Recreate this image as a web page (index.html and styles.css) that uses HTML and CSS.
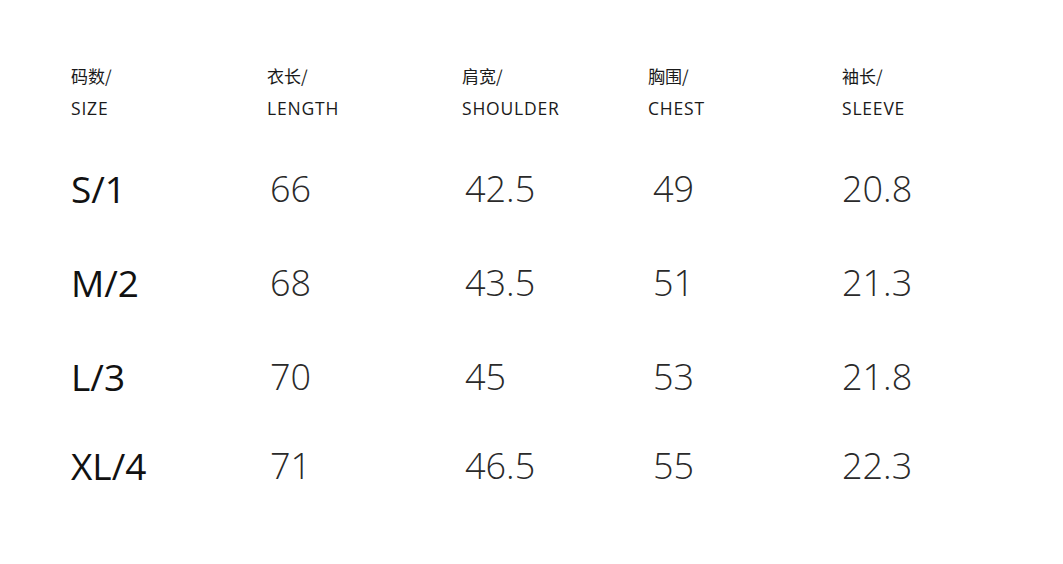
FILE: index.html
```html
<!DOCTYPE html>
<html lang="zh">
<head>
<meta charset="utf-8">
<link rel="stylesheet" href="styles.css">
</head>
<body>
<div class="table">
  <div class="head">
    <div class="th"><span class="cn">码数/</span><span class="en">SIZE</span></div>
    <div class="th"><span class="cn">衣长/</span><span class="en">LENGTH</span></div>
    <div class="th"><span class="cn">肩宽/</span><span class="en">SHOULDER</span></div>
    <div class="th"><span class="cn">胸围/</span><span class="en">CHEST</span></div>
    <div class="th"><span class="cn">袖长/</span><span class="en">SLEEVE</span></div>
  </div>
  <div class="row r1">
    <div class="size">S/1</div><div class="num">66</div><div class="num">42.5</div><div class="num c4">49</div><div class="num last">20.8</div>
  </div>
  <div class="row r2">
    <div class="size">M/2</div><div class="num">68</div><div class="num">43.5</div><div class="num c4">51</div><div class="num last">21.3</div>
  </div>
  <div class="row r3">
    <div class="size">L/3</div><div class="num">70</div><div class="num">45</div><div class="num c4">53</div><div class="num last">21.8</div>
  </div>
  <div class="row r4">
    <div class="size">XL/4</div><div class="num">71</div><div class="num">46.5</div><div class="num c4">55</div><div class="num last">22.3</div>
  </div>
</div>
</body>
</html>
```
FILE: styles.css
```css
html, body {
  margin: 0;
  padding: 0;
  background: #fff;
}
body {
  width: 1063px;
  height: 564px;
  overflow: hidden;
  font-family: "Open Sans", "Noto Sans CJK SC", sans-serif;
  color: #1a1a1a;
}
.table {
  padding: 60px 0 0 71px;
}
.head, .row {
  display: grid;
  grid-template-columns: 196px 195px 186px 194px 150px;
}
.th {
  display: flex;
  flex-direction: column;
  line-height: 32px;
  color: #1a1a1a;
}
.cn {
  font-family: "Noto Sans CJK SC", sans-serif;
  font-size: 17px;
}
.en {
  font-family: "Open Sans", sans-serif;
  font-size: 17.5px;
  letter-spacing: 0.8px;
}
.row {
  height: 94px;
  align-items: center;
  font-size: 36px;
}
.r1 { margin-top: 17px; }
.r4 { height: 84px; }
.size {
  font-size: 37px;
  font-weight: 400;
  color: #111;
}
.num {
  font-weight: 300;
  color: #2a2a2a;
  padding-left: 3px;
}
.num.c4 {
  padding-left: 5px;
}
.num.last {
  padding-left: 0;
}
```
